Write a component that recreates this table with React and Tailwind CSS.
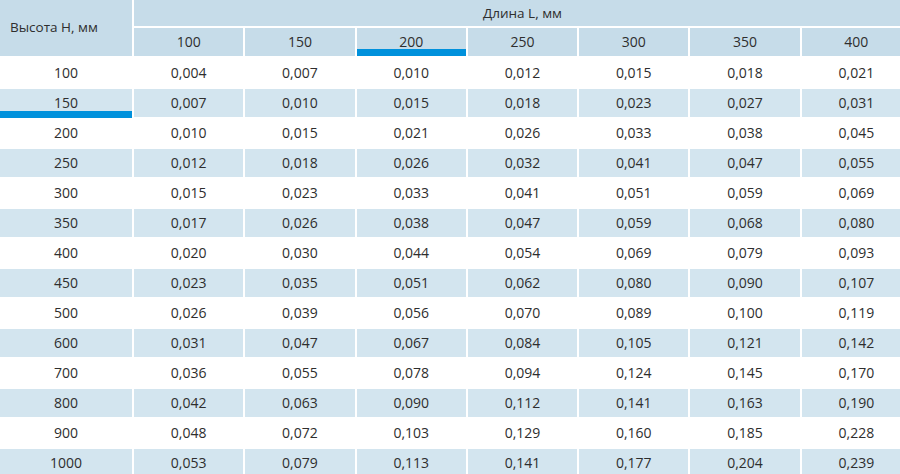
import React from 'react';

const lengths = [100, 150, 200, 250, 300, 350, 400];

const rows = [
  [100, ['0,004', '0,007', '0,010', '0,012', '0,015', '0,018', '0,021']],
  [150, ['0,007', '0,010', '0,015', '0,018', '0,023', '0,027', '0,031']],
  [200, ['0,010', '0,015', '0,021', '0,026', '0,033', '0,038', '0,045']],
  [250, ['0,012', '0,018', '0,026', '0,032', '0,041', '0,047', '0,055']],
  [300, ['0,015', '0,023', '0,033', '0,041', '0,051', '0,059', '0,069']],
  [350, ['0,017', '0,026', '0,038', '0,047', '0,059', '0,068', '0,080']],
  [400, ['0,020', '0,030', '0,044', '0,054', '0,069', '0,079', '0,093']],
  [450, ['0,023', '0,035', '0,051', '0,062', '0,080', '0,090', '0,107']],
  [500, ['0,026', '0,039', '0,056', '0,070', '0,089', '0,100', '0,119']],
  [600, ['0,031', '0,047', '0,067', '0,084', '0,105', '0,121', '0,142']],
  [700, ['0,036', '0,055', '0,078', '0,094', '0,124', '0,145', '0,170']],
  [800, ['0,042', '0,063', '0,090', '0,112', '0,141', '0,163', '0,190']],
  [900, ['0,048', '0,072', '0,103', '0,129', '0,160', '0,185', '0,228']],
  [1000, ['0,053', '0,079', '0,113', '0,141', '0,177', '0,204', '0,239']],
];

const cols = 'grid grid-cols-[132px_repeat(7,1fr)] gap-x-[2px]';

export default function App() {
  return (
    <div className="w-[900px] h-[474px] overflow-hidden bg-white text-[#2e2e2e] font-['Open_Sans',sans-serif]">
      <div className="w-[911px]">
        {/* шапка таблицы */}
        <div className={`${cols} grid-rows-[26px_28px] gap-y-[2px]`}>
          <div className="row-span-2 bg-[#c6dce9] flex items-center pl-[10px] pb-px text-[13.5px]">
            Высота H, мм
          </div>
          <div className="col-span-7 bg-[#c6dce9] flex items-center justify-center text-[13.5px]">
            Длина L, мм
          </div>
          {lengths.map((l) => (
            <div key={l} className="relative bg-[#c6dce9] flex items-center justify-center pb-px text-[14px]">
              {l}
              {l === 200 && <span className="absolute left-0 right-0 bottom-0 h-[7px] bg-[#0091dc]" />}
            </div>
          ))}
        </div>

        {/* данные */}
        <div className={`${cols} auto-rows-[28px] gap-y-[2px] mt-[3px]`}>
          {rows.map(([h, vals], i) => {
            const bg = i % 2 === 1 ? 'bg-[#d3e5ef]' : 'bg-white';
            return (
              <React.Fragment key={h}>
                <div className={`relative ${bg} flex items-center justify-center pb-px text-[14px]`}>
                  {h}
                  {h === 150 && <span className="absolute left-0 right-0 -bottom-px h-[7px] bg-[#0091dc]" />}
                </div>
                {vals.map((v, j) => (
                  <div key={j} className={`${bg} flex items-center justify-center pb-px text-[14px]`}>
                    {v}
                  </div>
                ))}
              </React.Fragment>
            );
          })}
        </div>
      </div>
    </div>
  );
}
